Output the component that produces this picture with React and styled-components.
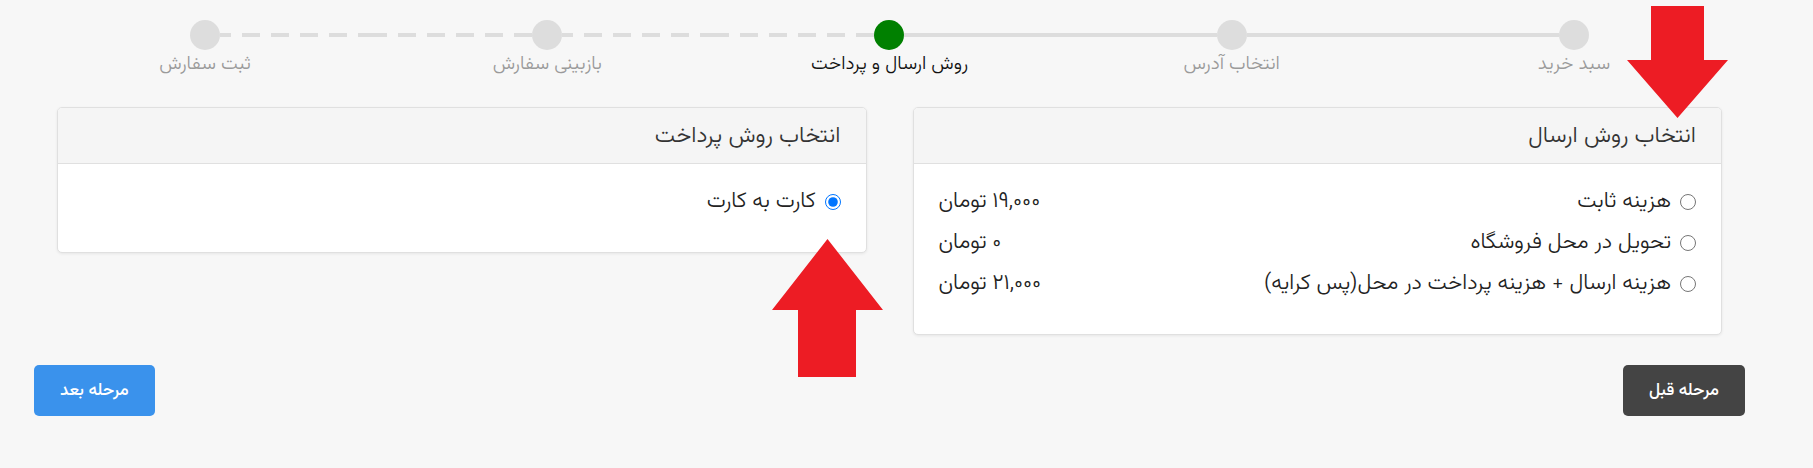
import React from "react";
import styled, { createGlobalStyle } from "styled-components";

const GlobalStyle = createGlobalStyle`
  html, body { margin: 0; padding: 0; background: #f7f7f7; }
  body {
    font-family: "Vazirmatn", "Noto Sans Arabic", "DejaVu Sans", sans-serif;
    color: #212529;
  }
  * { box-sizing: border-box; }
`;

const Root = styled.div`
  position: relative;
  direction: ltr;
  width: 1813px;
  min-height: 468px;
  padding-top: 20px;
`;

const Container = styled.div`
  direction: rtl;
  width: 1711px;
  margin-left: 34px;
`;

const Stepper = styled.div`
  display: flex;
`;

const Step = styled.div`
  flex: 1;
  display: flex;
  flex-direction: column;
`;

const Track = styled.div`
  display: flex;
  align-items: center;
  height: 30px;
`;

const lineBg = {
  none: "transparent",
  solid: "#dddddd",
  dashed: "repeating-linear-gradient(to left, #dddddd 0 18px, transparent 18px 29px)",
};

const HalfLine = styled.div`
  flex: 1;
  height: 4px;
  background: ${(p) => lineBg[p.$variant]};
`;

const Dot = styled.div`
  width: 30px;
  height: 30px;
  border-radius: 50%;
  background: ${(p) => (p.$active ? "#008000" : "#dddddd")};
  flex-shrink: 0;
`;

const StepLabel = styled.div`
  text-align: center;
  font-size: 19px;
  font-weight: 300;
  line-height: 26px;
  margin-top: 2px;
  color: ${(p) => (p.$active ? "#111111" : "#9a9a9a")};
`;

const Cards = styled.div`
  display: grid;
  grid-template-columns: 1fr 1fr;
  column-gap: 46px;
  padding: 0 23px;
  margin-top: 29px;
  align-items: start;
`;

const Card = styled.div`
  background: #ffffff;
  border: 1px solid #e0e0e0;
  border-radius: 5px;
  box-shadow: 0 1px 3px rgba(0, 0, 0, 0.07);
  overflow: hidden;
`;

const CardHeader = styled.div`
  height: 56px;
  padding: 0 25px;
  display: flex;
  align-items: center;
  background: #f5f5f5;
  border-bottom: 1px solid #e0e0e0;
  font-size: 23px;
  font-weight: 300;
  color: #333333;
`;

const CardBody = styled.div`
  padding: 23px 25px 24px;
`;

const OptionRow = styled.div`
  display: flex;
  align-items: center;
  height: 29px;
  margin-bottom: 12px;
  font-size: 21.8px;
  font-weight: 300;
  color: #222222;
`;

const OptionLabel = styled.label`
  display: flex;
  align-items: center;
  gap: 9px;
`;

const Radio = styled.input`
  width: 16px;
  height: 16px;
  margin: 0;
`;

const Price = styled.span`
  margin-right: auto;
  text-align: left;
`;

const Actions = styled.div`
  display: flex;
  justify-content: space-between;
  margin-top: 30px;
`;

const Button = styled.button`
  height: 51px;
  padding: 0 26px;
  border: none;
  border-radius: 5px;
  font-family: inherit;
  font-size: 17px;
  font-weight: 500;
  color: #ffffff;
  background: ${(p) => (p.$variant === "primary" ? "#3a92ec" : "#444444")};
  cursor: pointer;
`;

const Arrow = styled.svg`
  position: absolute;
  left: ${(p) => p.$left}px;
  top: ${(p) => p.$top}px;
`;

const steps = [
  "سبد خرید",
  "انتخاب آدرس",
  "روش ارسال و پرداخت",
  "بازبینی سفارش",
  "ثبت سفارش",
];
const activeIndex = 2;
const segments = ["solid", "solid", "dashed", "dashed"];

const shipping = [
  { label: "هزینه ثابت", price: "۱۹,۰۰۰ تومان" },
  { label: "تحویل در محل فروشگاه", price: "۰ تومان" },
  { label: "هزینه ارسال + هزینه پرداخت در محل(پس کرایه)", price: "۲۱,۰۰۰ تومان" },
];

export default function App() {
  return (
    <Root>
      <GlobalStyle />
      <Container>
        <Stepper>
          {steps.map((s, i) => (
            <Step key={s}>
              <Track>
                <HalfLine $variant={i === 0 ? "none" : segments[i - 1]} />
                <Dot $active={i === activeIndex} />
                <HalfLine $variant={i === steps.length - 1 ? "none" : segments[i]} />
              </Track>
              <StepLabel $active={i === activeIndex}>{s}</StepLabel>
            </Step>
          ))}
        </Stepper>

        <Cards>
          <Card>
            <CardHeader>انتخاب روش ارسال</CardHeader>
            <CardBody>
              {shipping.map((o, i) => (
                <OptionRow key={i}>
                  <OptionLabel>
                    <Radio type="radio" name="shipping" />
                    {o.label}
                  </OptionLabel>
                  <Price>{o.price}</Price>
                </OptionRow>
              ))}
            </CardBody>
          </Card>
          <Card>
            <CardHeader>انتخاب روش پرداخت</CardHeader>
            <CardBody>
              <OptionRow>
                <OptionLabel>
                  <Radio type="radio" name="payment" defaultChecked />
                  کارت به کارت
                </OptionLabel>
              </OptionRow>
            </CardBody>
          </Card>
        </Cards>

        <Actions>
          <Button $variant="dark">مرحله قبل</Button>
          <Button $variant="primary">مرحله بعد</Button>
        </Actions>
      </Container>

      <Arrow $left={1627} $top={6} width="101" height="112" viewBox="0 0 101 112">
        <polygon points="24,0 77,0 77,54 101,54 50.5,112 0,54 24,54" fill="#ed1c24" />
      </Arrow>
      <Arrow $left={772} $top={239} width="111" height="138" viewBox="0 0 111 138">
        <polygon points="55.5,0 111,71 84,71 84,138 26,138 26,71 0,71" fill="#ed1c24" />
      </Arrow>
    </Root>
  );
}
